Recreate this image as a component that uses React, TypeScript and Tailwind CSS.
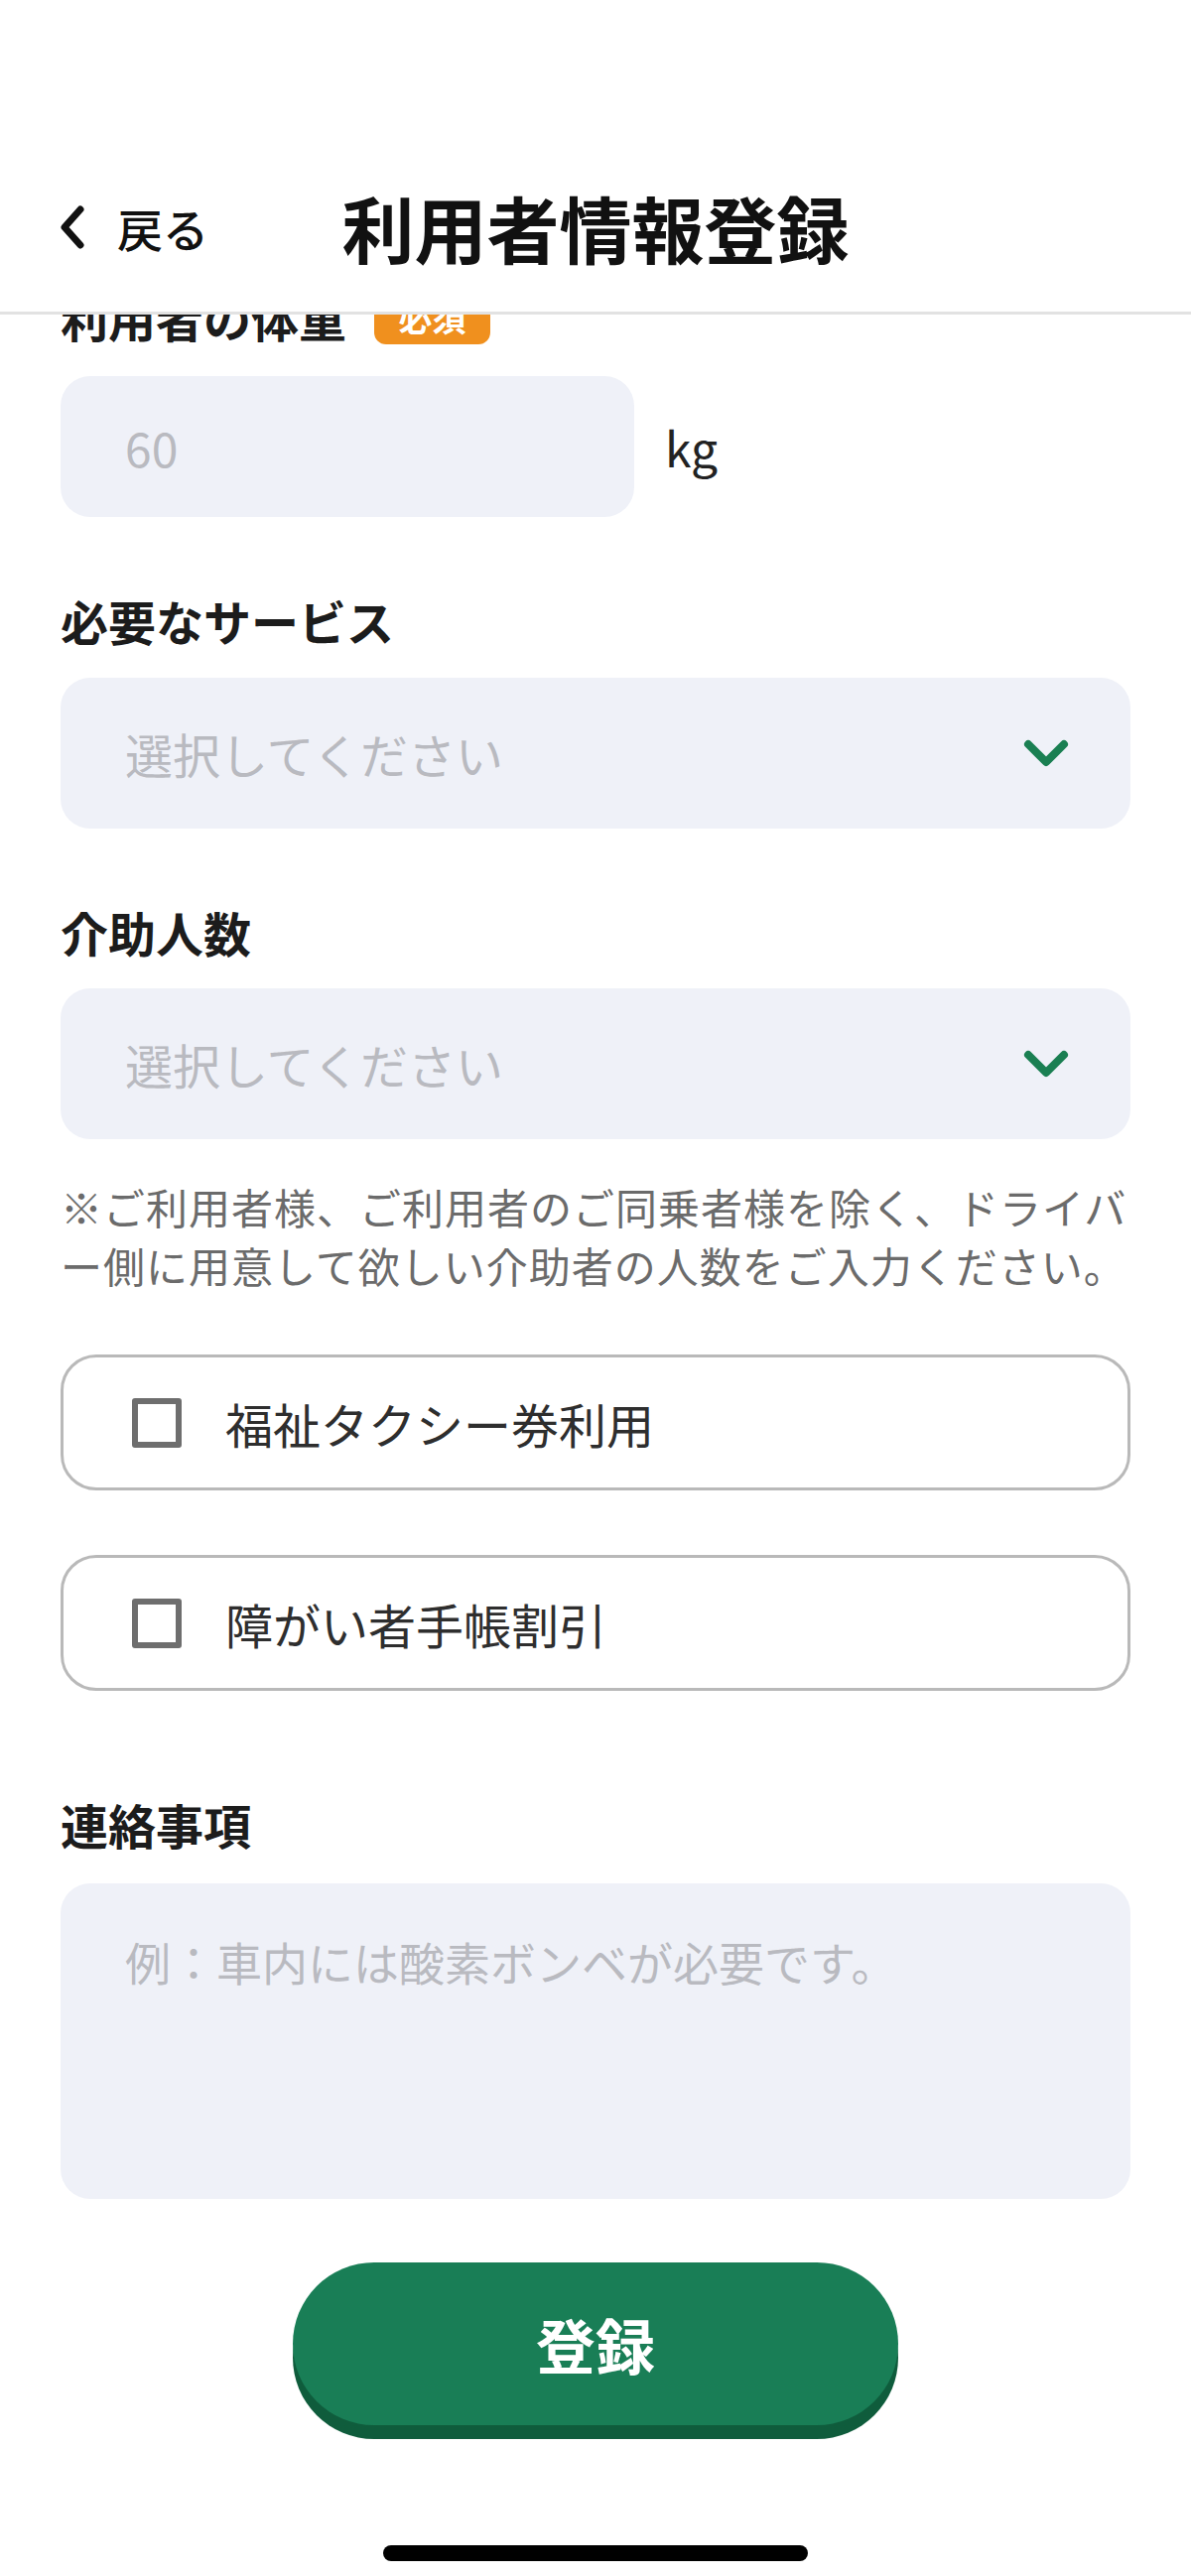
import React from "react";

const font = "font-['Noto_Sans_CJK_JP','Noto_Sans',sans-serif]";

function BackChevron() {
  return (
    <svg width="26" height="44" viewBox="0 0 26 44" fill="none">
      <polyline
        points="21,4 5,22 21,40"
        stroke="#111"
        strokeWidth="7"
        strokeLinecap="round"
        strokeLinejoin="round"
      />
    </svg>
  );
}

function DownChevron() {
  return (
    <svg width="46" height="30" viewBox="0 0 46 30" fill="none">
      <polyline
        points="5,6 23,24 41,6"
        stroke="#1a7f52"
        strokeWidth="8"
        strokeLinecap="round"
        strokeLinejoin="round"
      />
    </svg>
  );
}

function Label({ children }: { children: React.ReactNode }) {
  return <div className="h-[60px] leading-[60px] text-[48px] font-bold text-[#1c1c1c]">{children}</div>;
}

function SelectBox({ className = "" }: { className?: string }) {
  return (
    <div
      className={`flex h-[152px] items-center justify-between rounded-[30px] bg-[#eff1f8] pl-[65px] pr-[62px] ${className}`}
    >
      <span className="text-[48px] text-[#b9bac0]">選択してください</span>
      <DownChevron />
    </div>
  );
}

function CheckRow({ label, className = "" }: { label: string; className?: string }) {
  return (
    <div
      className={`flex h-[137px] items-center gap-[44px] rounded-[36px] border-[3px] border-[#b9b9b9] pl-[69px] ${className}`}
    >
      <span className="h-[50px] w-[50px] rounded-[3px] border-[6px] border-[#6e6e6e]" />
      <span className="text-[48px] text-[#2e2e2e]">{label}</span>
    </div>
  );
}

export default function App() {
  return (
    <div className={`flex h-[2596px] w-[1200px] flex-col overflow-hidden bg-white ${font}`}>
      {/* Status bar space */}
      <div className="h-[150px] shrink-0" />

      {/* Header */}
      <header className="relative z-10 grid h-[167px] shrink-0 grid-cols-[1fr_auto_1fr] items-center border-b-[3px] border-[#e2e2e2] bg-white pb-[6px]">
        <div className="flex items-center gap-[32px] pl-[60px]">
          <BackChevron />
          <span className="text-[46px] font-medium text-[#111]">戻る</span>
        </div>
        <h1 className="text-[73px] font-bold text-[#111]">利用者情報登録</h1>
        <div />
      </header>

      {/* Scrolled form */}
      <main className="flex flex-1 flex-col overflow-hidden px-[61px]">
        <div className="-mt-[28px] flex h-[60px] items-center gap-[28px]">
          <span className="text-[48px] font-bold leading-[60px] text-[#1c1c1c]">利用者の体重</span>
          <span className="flex h-[56px] w-[117px] items-center justify-center rounded-[12px] bg-[#f0901e] text-[34px] font-bold text-white">
            必須
          </span>
        </div>

        <div className="mt-[30px] flex items-center gap-[31px]">
          <div className="flex h-[142px] w-[578px] items-center rounded-[30px] bg-[#eff1f8] pl-[65px]">
            <span className="text-[48px] text-[#b9bac0]">60</span>
          </div>
          <span className="text-[48px] text-[#222]">kg</span>
        </div>

        <div className="mt-[74px]">
          <Label>必要なサービス</Label>
        </div>
        <SelectBox className="mt-[28px]" />

        <div className="mt-[74px]">
          <Label>介助人数</Label>
        </div>
        <SelectBox className="mt-[27px]" />

        <p className="mt-[38px] text-[42px] leading-[59px] tracking-[1px] text-[#6b6b6b]">
          ※ご利用者様、ご利用者のご同乗者様を除く、ドライバー側に用意して欲しい介助者の人数をご入力ください。
        </p>

        <CheckRow label="福祉タクシー券利用" className="mt-[61px]" />
        <CheckRow label="障がい者手帳割引" className="mt-[65px]" />

        <div className="mt-[104px]">
          <Label>連絡事項</Label>
        </div>
        <div className="mt-[30px] h-[318px] rounded-[30px] bg-[#eff1f8] px-[65px] pt-[48px]">
          <span className="text-[46px] leading-[60px] text-[#b9bac0]">例：車内には酸素ボンベが必要です。</span>
        </div>

        <button className="mx-auto mt-[64px] flex h-[164px] w-[610px] shrink-0 items-center justify-center rounded-full bg-[#197e56] text-[60px] font-bold text-white shadow-[0_14px_0_#0f5c3c]">
          登録
        </button>

        <div className="mx-auto mt-[121px] h-[16px] w-[428px] shrink-0 rounded-full bg-black" />
      </main>
    </div>
  );
}
